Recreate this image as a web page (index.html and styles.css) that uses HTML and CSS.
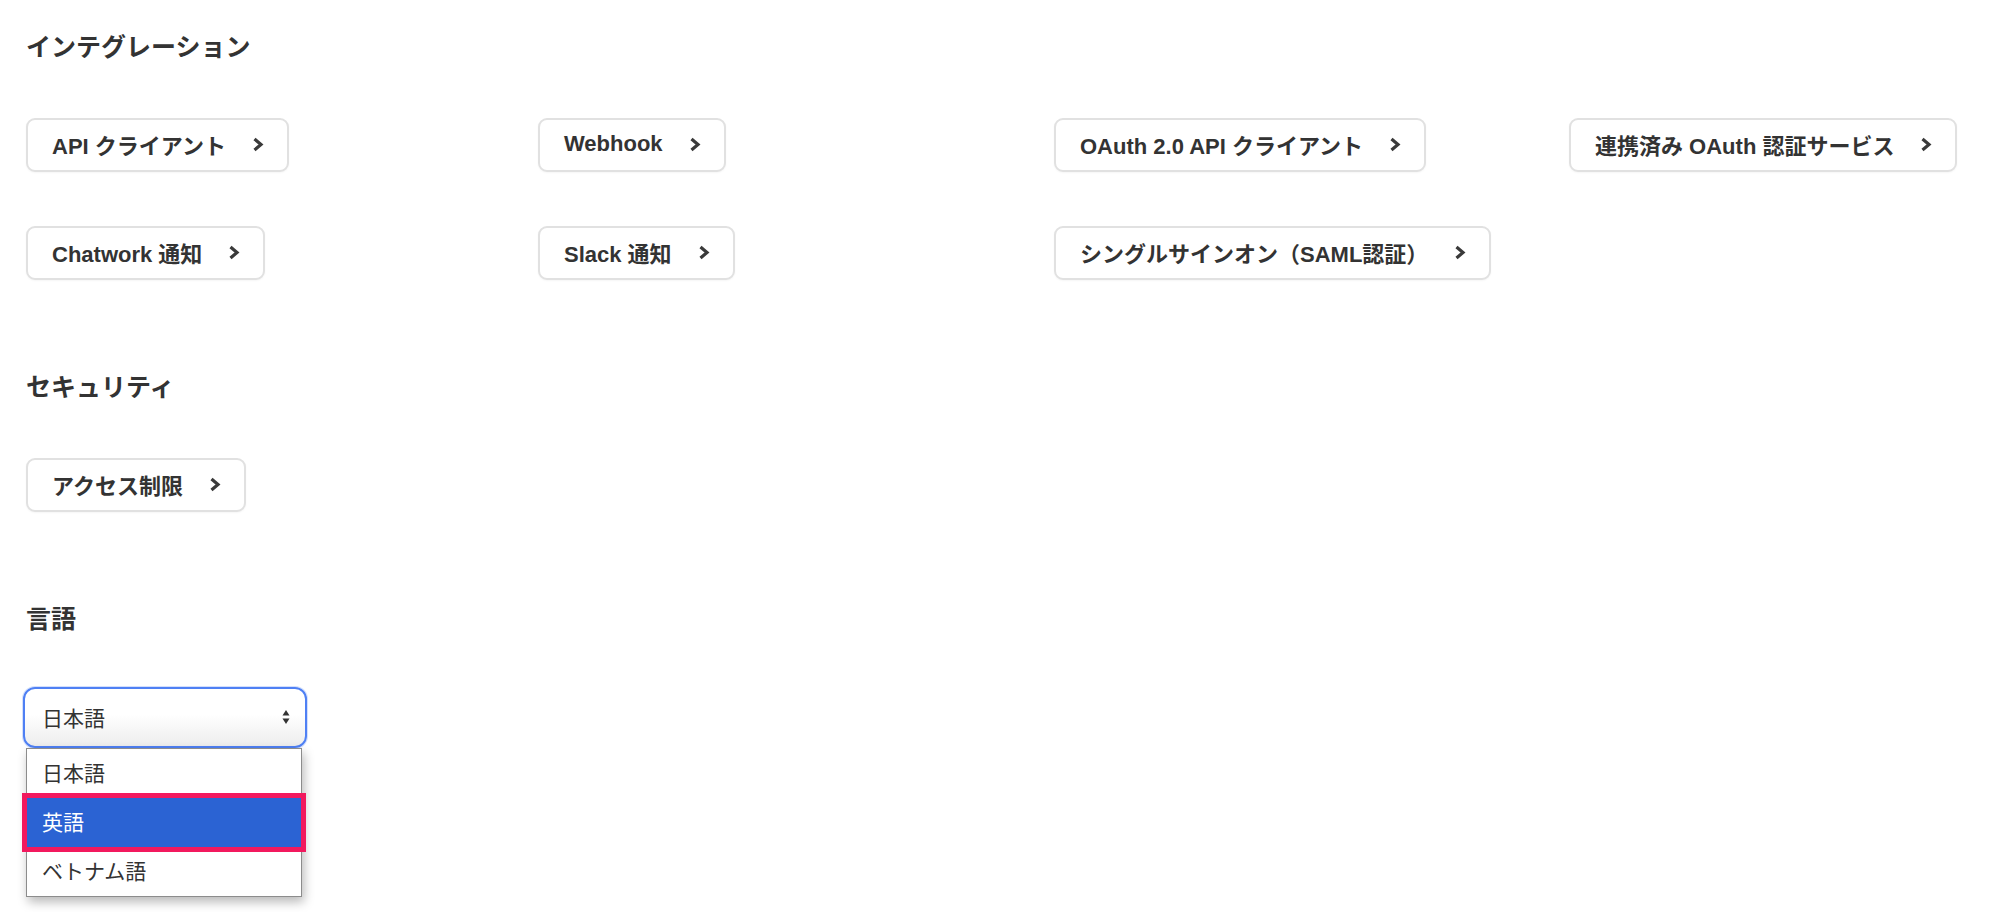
FILE: index.html
```html
<!DOCTYPE html>
<html lang="ja">
<head>
<meta charset="utf-8">
<title>設定</title>
<link rel="stylesheet" href="styles.css">
</head>
<body>
<main class="page">
  <section class="section">
    <h2 class="section-title">インテグレーション</h2>
    <div class="link-grid">
      <a class="link-btn" href="#">API クライアント<svg class="chev" viewBox="0 0 12 14"><path d="M2.5 1.5 L9 7 L2.5 12.5"/></svg></a>
      <a class="link-btn" href="#">Webhook<svg class="chev" viewBox="0 0 12 14"><path d="M2.5 1.5 L9 7 L2.5 12.5"/></svg></a>
      <a class="link-btn" href="#">OAuth 2.0 API クライアント<svg class="chev" viewBox="0 0 12 14"><path d="M2.5 1.5 L9 7 L2.5 12.5"/></svg></a>
      <a class="link-btn" href="#">連携済み OAuth 認証サービス<svg class="chev" viewBox="0 0 12 14"><path d="M2.5 1.5 L9 7 L2.5 12.5"/></svg></a>
      <a class="link-btn" href="#">Chatwork 通知<svg class="chev" viewBox="0 0 12 14"><path d="M2.5 1.5 L9 7 L2.5 12.5"/></svg></a>
      <a class="link-btn" href="#">Slack 通知<svg class="chev" viewBox="0 0 12 14"><path d="M2.5 1.5 L9 7 L2.5 12.5"/></svg></a>
      <a class="link-btn" href="#">シングルサインオン（SAML認証）<svg class="chev" viewBox="0 0 12 14"><path d="M2.5 1.5 L9 7 L2.5 12.5"/></svg></a>
    </div>
  </section>

  <section class="section">
    <h2 class="section-title">セキュリティ</h2>
    <div class="link-grid">
      <a class="link-btn" href="#">アクセス制限<svg class="chev" viewBox="0 0 12 14"><path d="M2.5 1.5 L9 7 L2.5 12.5"/></svg></a>
    </div>
  </section>

  <section class="section section-last">
    <h2 class="section-title">言語</h2>
    <div class="select-wrap">
      <div class="select">
        <span class="select-value">日本語</span>
        <svg class="select-arrows" viewBox="0 0 8 16"><path d="M4 1 L7.5 6.5 L0.5 6.5 Z"/><path d="M4 15 L7.5 9.5 L0.5 9.5 Z"/></svg>
      </div>
      <ul class="dropdown">
        <li class="option">日本語</li>
        <li class="option option-selected">英語</li>
        <li class="option">ベトナム語</li>
      </ul>
    </div>
  </section>
</main>
</body>
</html>
```

FILE: styles.css
```css
html, body {
  margin: 0;
  padding: 0;
  background: #ffffff;
}

body {
  font-family: "Liberation Sans", "Noto Sans CJK JP", sans-serif;
  color: #333333;
  min-height: 912px;
}

.page {
  padding: 29px 0 170px 26px;
}

.section {
  margin-bottom: 89px;
}

.section-last {
  margin-bottom: 0;
}

.section-title {
  margin: 0 0 53px;
  font-size: 25px;
  line-height: 36px;
  font-weight: 700;
  color: #333333;
}

.link-grid {
  display: grid;
  grid-template-columns: 512px 516px 515px 515px;
  row-gap: 54px;
  justify-items: start;
}

.link-btn {
  display: inline-flex;
  align-items: center;
  box-sizing: border-box;
  height: 54px;
  padding: 0 23px 3px 24px;
  border: 2px solid #e1e1e1;
  border-radius: 9px;
  background: #ffffff;
  color: #333333;
  font-size: 22px;
  font-weight: 700;
  text-decoration: none;
  white-space: nowrap;
  box-shadow: 0 1px 2px rgba(0, 0, 0, 0.04);
}

.chev {
  width: 12px;
  height: 15px;
  margin-left: 26px;
  margin-top: 2px;
  flex: none;
}

.chev path {
  fill: none;
  stroke: #3a3a3a;
  stroke-width: 3.2;
}

.select-wrap {
  position: relative;
  width: 284px;
  margin: -3px 0 0 -3px;
}

.select {
  display: flex;
  align-items: center;
  justify-content: space-between;
  box-sizing: border-box;
  height: 61px;
  padding: 0 15px 2px 17px;
  border: 2px solid #4f80f4;
  border-radius: 12px;
  background: linear-gradient(#ffffff 0%, #ffffff 45%, #ededed 100%);
  box-shadow: 0 0 0 1px rgba(79, 128, 244, 0.25);
}

.select-value {
  font-size: 21px;
  color: #333333;
}

.select-arrows {
  width: 8px;
  height: 16px;
}

.select-arrows path {
  fill: #333333;
}

.dropdown {
  position: absolute;
  top: 61px;
  left: 3px;
  width: 276px;
  box-sizing: border-box;
  margin: 0;
  padding: 0;
  list-style: none;
  background: #ffffff;
  border: 1px solid #8c8c8c;
  box-shadow: 2px 5px 10px rgba(0, 0, 0, 0.28);
}

.option {
  box-sizing: border-box;
  height: 49px;
  display: flex;
  align-items: center;
  padding: 0 0 4px 15px;
  font-size: 21px;
  color: #333333;
}

.option-selected {
  background: #2b63d3;
  color: #ffffff;
  outline: 5px solid #f2195e;
  position: relative;
}
```
